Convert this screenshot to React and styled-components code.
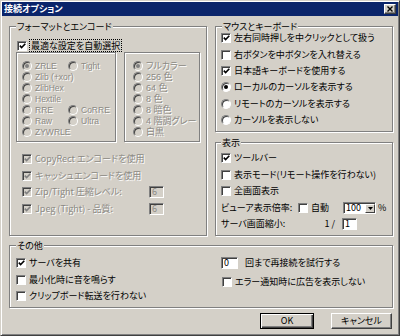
import React from "react";
import styled, { createGlobalStyle, css } from "styled-components";

const GlobalStyle = createGlobalStyle`
  html, body { margin: 0; padding: 0; background: #d4d0c8; }
  body {
    font-family: "Noto Sans CJK JP", "Noto Sans", sans-serif;
    font-size: 9px;
    line-height: 11px;
    font-feature-settings: "palt" 1;
    color: #000;
  }
  * { box-sizing: border-box; }
`;

const Window = styled.div`
  width: 400px;
  height: 336px;
  background: #d4d0c8;
  border: 1px solid;
  border-color: #d4d0c8 #404040 #404040 #d4d0c8;
  box-shadow: inset 1px 1px 0 #fff, inset -1px -1px 0 #808080;
  padding: 1px;
  display: flex;
  flex-direction: column;
  overflow: hidden;
`;

const TitleBar = styled.div`
  height: 14px;
  background: #0a246a;
  color: #fff;
  font-weight: bold;
  display: flex;
  align-items: center;
  justify-content: space-between;
  padding: 0 2px 0 2px;
`;

const TitleText = styled.span`
  display: inline-block;
  line-height: 10px;
`;

const CloseButton = styled.div`
  width: 12px;
  height: 10px;
  background: #d4d0c8;
  border: 1px solid;
  border-color: #fff #404040 #404040 #fff;
  box-shadow: inset -1px -1px 0 #808080;
  display: flex;
  align-items: center;
  justify-content: center;
`;

const Body = styled.div`
  padding: 10px 5px 0 7px;
  display: flex;
  flex-direction: column;
`;

const MainGrid = styled.div`
  display: grid;
  grid-template-columns: 198px 178px;
  column-gap: 8px;
  height: 210px;
`;

const RightColumn = styled.div`
  display: flex;
  flex-direction: column;
  gap: 10px;
`;

const Group = styled.div`
  position: relative;
  border: 1px solid #808080;
  box-shadow: inset 1px 1px 0 #fff, 1px 1px 0 #fff;
  height: ${(p) => p.$h}px;
  padding: ${(p) => p.$pad};
  margin-top: ${(p) => p.$mt || 0}px;
`;

const Legend = styled.span`
  position: absolute;
  top: -5px;
  left: ${(p) => p.$left ?? 6}px;
  padding: 0 1px;
  background: #d4d0c8;
  font-family: "Liberation Sans", "Noto Sans CJK JP", sans-serif;
  line-height: 10px;
  height: 10px;
  white-space: nowrap;
`;

const Row = styled.div`
  display: flex;
  align-items: center;
  gap: 3px;
  height: ${(p) => p.$h || 16.5}px;
  margin-left: ${(p) => p.$ml || 0}px;
  margin-top: ${(p) => p.$mt || 0}px;
  white-space: nowrap;
`;

const Text = styled.span`
  display: inline-block;
  line-height: 10px;
  white-space: nowrap;
  ${(p) =>
    p.$disabled &&
    css`
      color: #8c8a84;
      text-shadow: 1px 1px 0 #fff;
    `}
`;

const FocusText = styled.span`
  display: inline-block;
  border: 1px dotted #000;
  padding: 0 1px 0 1px;
  line-height: 11px;
  height: 13px;
  margin-left: -1px;
`;

const Box = styled.span`
  flex: none;
  width: 10px;
  height: 10px;
  background: ${(p) => (p.$disabled ? "#d4d0c8" : "#fff")};
  border: 1px solid;
  border-color: #808080 #fff #fff #808080;
  box-shadow: inset 1px 1px 0 #404040;
  display: inline-flex;
  align-items: center;
  justify-content: center;
`;

const RadioCircle = styled.span`
  flex: none;
  width: 10px;
  height: 10px;
  border-radius: 50%;
  background: ${(p) => (p.$disabled ? "#d4d0c8" : "#fff")};
  border: 1px solid;
  border-color: #808080 #fff #fff #808080;
  box-shadow: inset 1px 1px 0 #404040;
  display: inline-flex;
  align-items: center;
  justify-content: center;
  &::after {
    content: "";
    display: ${(p) => (p.$checked ? "block" : "none")};
    width: 4px;
    height: 4px;
    border-radius: 50%;
    background: ${(p) => (p.$disabled ? "#808080" : "#000")};
  }
`;

const InnerGrid = styled.div`
  display: grid;
  grid-template-columns: 100px 76px;
  column-gap: 8px;
  height: 90px;
`;

const InnerBox = styled.div`
  border: 1px solid #808080;
  box-shadow: inset 1px 1px 0 #fff, 1px 1px 0 #fff;
  padding: 7px 0 0 ${(p) => p.$pl}px;
  font-family: "Liberation Sans", "Noto Sans CJK JP", sans-serif;
  font-size: ${(p) => p.$fs || 9}px;
`;

const RadioRow = styled.div`
  display: grid;
  grid-template-columns: ${(p) => p.$cols || "auto"};
  align-items: center;
  height: 11px;
`;

const RadioCell = styled.div`
  display: flex;
  align-items: center;
  gap: 3px;
  white-space: nowrap;
`;

const OptionList = styled.div`
  margin-top: 9px;
  margin-left: 6px;
`;

const FieldRow = styled.div`
  display: grid;
  grid-template-columns: ${(p) => p.$cols};
  align-items: center;
  height: ${(p) => p.$h || 16.5}px;
  white-space: nowrap;
`;

const TextBox = styled.span`
  display: inline-flex;
  align-items: center;
  width: ${(p) => p.$w}px;
  height: 12px;
  line-height: 10px;
  padding-left: 2px;
  background: ${(p) => (p.$disabled ? "#d4d0c8" : "#fff")};
  color: ${(p) => (p.$disabled ? "#8c8a84" : "#000")};
  border: 1px solid;
  border-color: #808080 #fff #fff #808080;
  box-shadow: inset 1px 1px 0 #404040;
  margin-left: ${(p) => p.$ml || 0}px;
`;

const Select = styled.span`
  display: inline-flex;
  align-items: stretch;
  width: 33px;
  height: 12px;
  background: #fff;
  border: 1px solid;
  border-color: #808080 #fff #fff #808080;
  box-shadow: inset 1px 1px 0 #404040;
  padding: 1px 0 0 2px;
`;

const SelectValue = styled.span`
  flex: 1;
  display: flex;
  align-items: center;
  line-height: 10px;
`;

const SelectArrow = styled.span`
  width: 10px;
  background: #d4d0c8;
  border: 1px solid;
  border-color: #fff #404040 #404040 #fff;
  display: flex;
  align-items: center;
  justify-content: center;
`;

const OtherGrid = styled.div`
  display: grid;
  grid-template-columns: 205px 1fr;
`;

const ButtonBar = styled.div`
  display: flex;
  justify-content: flex-end;
  gap: 17px;
  margin-top: 5px;
  padding-right: 1px;
`;

const Button = styled.div`
  width: ${(p) => p.$w}px;
  height: 16px;
  line-height: 10px;
  display: flex;
  align-items: center;
  justify-content: center;
  background: #d4d0c8;
  ${(p) =>
    p.$default
      ? css`
          border: 1px solid #000;
          box-shadow: inset 1px 1px 0 #fff, inset -1px -1px 0 #404040,
            inset -2px -2px 0 #808080;
        `
      : css`
          border: 1px solid;
          border-color: #fff #404040 #404040 #fff;
          box-shadow: inset -1px -1px 0 #808080;
        `}
`;

const Check = ({ checked, disabled }) => (
  <Box $disabled={disabled}>
    {checked && (
      <svg width="7" height="6" viewBox="0 0 7 6">
        <path
          d="M0.8 2.6 L2.6 4.5 L6.3 0.8"
          fill="none"
          stroke={disabled ? "#808080" : "#000"}
          strokeWidth="1.6"
        />
      </svg>
    )}
  </Box>
);

const CheckItem = ({ label, checked, disabled, ml, h }) => (
  <Row $ml={ml} $h={h}>
    <Check checked={checked} disabled={disabled} />
    <Text $disabled={disabled}>{label}</Text>
  </Row>
);

const Radio = ({ label, checked, disabled }) => (
  <RadioCell>
    <RadioCircle $checked={checked} $disabled={disabled} />
    <Text $disabled={disabled}>{label}</Text>
  </RadioCell>
);

const RadioItem = ({ label, checked, h }) => (
  <Row $h={h}>
    <RadioCircle $checked={checked} />
    <Text>{label}</Text>
  </Row>
);

const encodings = [
  ["ZRLE", "Tight"],
  ["Zlib (+xor)"],
  ["ZlibHex"],
  ["Hextile"],
  ["RRE", "CoRRE"],
  ["Raw", "Ultra"],
  ["ZYWRLE"],
];

const colours = ["フルカラー", "256 色", "64 色", "8 色", "8 暗色", "4 階調グレー", "白黒"];

export default function App() {
  return (
    <>
      <GlobalStyle />
      <Window>
        <TitleBar>
          <TitleText>接続オプション</TitleText>
          <CloseButton>
            <svg width="6" height="6" viewBox="0 0 6 6">
              <path d="M0.5 0.5 L5.5 5.5 M5.5 0.5 L0.5 5.5" stroke="#000" strokeWidth="1.4" />
            </svg>
          </CloseButton>
        </TitleBar>
        <Body>
          <MainGrid>
            <Group $h={210} $pad="12px 6px 0 6px">
              <Legend>フォーマットとエンコード</Legend>
              <Row $h={13} $ml={1}>
                <Check checked />
                <FocusText>最適な設定を自動選択</FocusText>
              </Row>
              <InnerGrid>
                <InnerBox $pl={5} $fs={8.5}>
                  {encodings.map((r, i) => (
                    <RadioRow key={i} $cols="46px auto">
                      <Radio label={r[0]} checked={i === 0} disabled />
                      {r[1] && <Radio label={r[1]} disabled />}
                    </RadioRow>
                  ))}
                </InnerBox>
                <InnerBox $pl={8}>
                  {colours.map((c, i) => (
                    <RadioRow key={c}>
                      <Radio label={c} checked={i === 0} disabled />
                    </RadioRow>
                  ))}
                </InnerBox>
              </InnerGrid>
              <OptionList>
                <CheckItem label="CopyRect エンコードを使用" checked disabled />
                <CheckItem label="キャッシュエンコードを使用" checked disabled />
                <FieldRow $cols="127px auto">
                  <CheckItem label="Zip/Tight 圧縮レベル:" checked disabled />
                  <TextBox $w={15} $disabled>6</TextBox>
                </FieldRow>
                <FieldRow $cols="127px auto">
                  <CheckItem label="Jpeg (Tight) - 品質:" checked disabled />
                  <TextBox $w={15} $disabled>6</TextBox>
                </FieldRow>
              </OptionList>
            </Group>
            <RightColumn>
              <Group $h={106} $pad="3px 0 0 5px">
                <Legend>マウスとキーボード</Legend>
                <CheckItem h={16.4} label="左右同時押しを中クリックとして扱う" checked />
                <CheckItem h={16.4} label="右ボタンを中ボタンを入れ替える" />
                <CheckItem h={16.4} label="日本語キーボードを使用する" checked />
                <RadioItem h={16.4} label="ローカルのカーソルを表示する" checked />
                <RadioItem h={16.4} label="リモートのカーソルを表示する" />
                <RadioItem h={16.4} label="カーソルを表示しない" />
              </Group>
              <Group $h={94} $pad="7px 0 0 5px">
                <Legend $left={5}>表示</Legend>
                <CheckItem label="ツールバー" checked />
                <CheckItem label="表示モード(リモート操作を行わない)" />
                <CheckItem label="全画面表示" />
                <FieldRow $cols="77px 45px 35px auto">
                  <Text>ビューア表示倍率:</Text>
                  <CheckItem label="自動" />
                  <Select>
                    <SelectValue>100</SelectValue>
                    <SelectArrow>
                      <svg width="5" height="3" viewBox="0 0 5 3">
                        <path d="M0 0 H5 L2.5 3 Z" fill="#000" />
                      </svg>
                    </SelectArrow>
                  </Select>
                  <Text>%</Text>
                </FieldRow>
                <FieldRow $h={15} $cols="77px 37px auto">
                  <Text>サーバ画面縮小:</Text>
                  <Text style={{ justifySelf: "end" }}>1 /</Text>
                  <TextBox $w={15} $ml={7}>1</TextBox>
                </FieldRow>
              </Group>
            </RightColumn>
          </MainGrid>
          <Group $h={63} $mt={9} $pad="9px 0 0 6px">
            <Legend>その他</Legend>
            <OtherGrid>
              <div>
                <CheckItem label="サーバを共有" checked />
                <CheckItem label="最小化時に音を鳴らす" />
                <CheckItem label="クリップボード転送を行わない" />
              </div>
              <div>
                <Row $h={16.5}>
                  <TextBox $w={17}>0</TextBox>
                  <Text style={{ marginLeft: 4 }}>回まで再接続を試行する</Text>
                </Row>
                <Row $h={16.5} $mt={2} $ml={1}>
                  <Check />
                  <Text>エラー通知時に広告を表示しない</Text>
                </Row>
              </div>
            </OtherGrid>
          </Group>
          <ButtonBar>
            <Button $w={54} $default>OK</Button>
            <Button $w={61}>キャンセル</Button>
          </ButtonBar>
        </Body>
      </Window>
    </>
  );
}
